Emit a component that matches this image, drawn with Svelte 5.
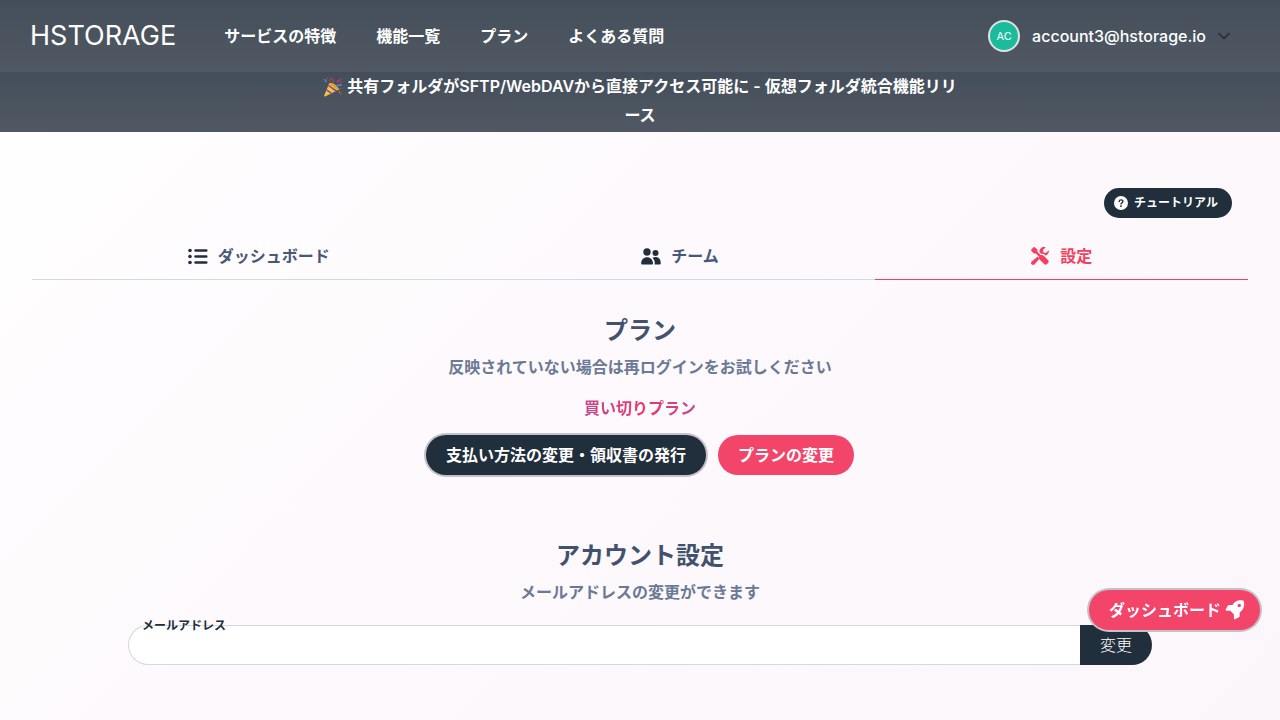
<script lang="ts">
  const links = ['サービスの特徴', '機能一覧', 'プラン', 'よくある質問'];

  const tabs = [
    { id: 'dashboard', label: 'ダッシュボード' },
    { id: 'team', label: 'チーム' },
    { id: 'settings', label: '設定' }
  ];

  let current = 'settings';
  let email = '';
</script>

<header>
  <div class="navbar">
    <a class="logo" href="#home">HSTORAGE</a>
    <nav>
      {#each links as link}
        <a href="#{link}">{link}</a>
      {/each}
    </nav>
    <button class="account">
      <span class="avatar">AC</span>
      <span>account3@hstorage.io</span>
      <svg class="chevron" width="12" height="12" viewBox="0 0 12 12" fill="none" stroke="#212e3b" stroke-width="1.6" stroke-linecap="round" stroke-linejoin="round" aria-hidden="true">
        <path d="M1 3.5l5 5 5-5" />
      </svg>
    </button>
  </div>
  <div class="banner">
    <a href="#news">
      <svg class="party" width="20" height="20" viewBox="0 0 20 20" aria-hidden="true">
        <path d="M6.2 6.2L1.2 18.6c-.2.7.2 1.1.9.8L16 12.6C14.2 8.7 10 5.200 6.200 6.200z" fill="#f6c53a" />
        <path d="M5 9.100l7.300 5.300 2.200-1.100C11 11.800 7.800 9.400 5.600 7.500zM3.200 13.600l4.200 3.200 1.700-.8-5.200-4z" fill="#8a4bb0" />
        <path d="M6.200 6.200c2.600-1.200 8.300 2.800 9.800 6.400-2.200.2-8.500-3.600-9.800-6.400z" fill="#e0a52c" />
        <path d="M1 2.500l2.500 1M2 5l1.500-1M13 9.500c1.500-1.600 3-1.800 6-1.300" fill="none" stroke="#4d8ce8" stroke-width="1.300" />
        <path d="M7 5c-1-2 .4-3.300 1.800-4M10 5.500C11 4 10.500 2.800 9 2M14.500 6c-.4-2 .5-2.600 1.500-2.500S17.500 2 18.500 1.700" fill="none" stroke="#b53a58" stroke-width="1.300" />
        <g fill="#d8455c">
          <circle cx="17.500" cy="11.500" r=".8" />
          <circle cx="18" cy="17" r=".8" />
          <circle cx="4.500" cy="1.600" r=".7" />
          <circle cx="18" cy="5" r=".7" />
        </g>
        <circle cx="16.500" cy="15" r=".7" fill="#e8ad36" />
      </svg>
      共有フォルダがSFTP/WebDAVから直接アクセス可能に - 仮想フォルダ統合機能リリース
    </a>
  </div>
</header>

<main>
  <div class="tools">
    <button class="tutorial">
      <svg width="14" height="14" viewBox="0 0 14 14" aria-hidden="true">
        <circle cx="7" cy="7" r="7" fill="#fff" />
        <path d="M5.200 5.600C5.200 4.500 6 3.900 7 3.900s1.900.6 1.900 1.600C8.900 6.700 7 6.800 7 8.100" fill="none" stroke="#212e3b" stroke-width="1.400" stroke-linecap="round" />
        <circle cx="7" cy="10.200" r=".9" fill="#212e3b" />
      </svg>
      チュートリアル
    </button>
  </div>

  <div class="tabs" role="tablist">
    {#each tabs as tab}
      <button role="tab" aria-selected={current === tab.id} class:active={current === tab.id} on:click={() => (current = tab.id)}>
        {#if tab.id === 'dashboard'}
          <svg width="20" height="20" viewBox="0 0 20 20" fill="#212e3b" aria-hidden="true">
            <circle cx="2" cy="4.500" r="1.800" />
            <circle cx="2" cy="10.500" r="1.800" />
            <circle cx="2" cy="16.500" r="1.800" />
            <rect x="6.300" y="3.300" width="13.200" height="2.400" rx="1.200" />
            <rect x="6.300" y="9.300" width="13.200" height="2.400" rx="1.200" />
            <rect x="6.300" y="15.300" width="13.200" height="2.400" rx="1.200" />
          </svg>
        {:else if tab.id === 'team'}
          <svg width="20" height="20" viewBox="0 0 20 20" fill="#212e3b" aria-hidden="true">
            <circle cx="6" cy="6" r="3.700" />
            <circle cx="14.500" cy="7" r="3" />
            <path d="M.2 17.500c0-3.800 2.500-6.200 5.800-6.200s6 2.400 6 6.200c0 .7-.4 1-1 1H1.200c-.6 0-1-.3-1-1z" />
            <path d="M11.500 11.900c.8-.6 1.800-.8 3-.8 3 0 5.200 2.200 5.200 5.500v1c0 .6-.3.900-.9.900h-5.200c.6-2.600-.2-5-2.100-6.600z" />
          </svg>
        {:else}
          <svg width="20" height="20" viewBox="0 0 20 20" fill="#f43f5e" aria-hidden="true">
            <path d="M1.300 3.600L3.600 1.300c.4-.4.700-.3 1.100 0l2.400 1.900c.3.300.4.600.4 1v1.700l3.200 3.200c1-.4 2.200-.1 3 .7l4.300 4.300c.9.900.9 2 0 2.900l-1 1c-.9.900-2 .9-2.900 0l-4.300-4.300c-.8-.8-1.100-2-.7-3L5.900 7.500H4.200c-.4 0-.7-.1-1-.4L1.300 4.700c-.3-.4-.3-.8 0-1.100z" />
            <path d="M18.700 4.200l-2.800 2.700-2.500-.4-.4-2.500 2.700-2.700c-1.900-.7-3.800-.2-5 1.100-1 1-1.400 2.300-1.200 3.600l1.800 1.900c1.500-.3 2.700.1 3.700 1.100l.6.600c.6-.2 1.200-.6 1.700-1.100 1.200-1.200 2-2.800 1.400-4.300z" />
            <path d="M7.800 10.600l-6.100 4.800c-1 1-1 2 0 2.900s2 .9 2.900 0l4.600-5.200c-.3-1-.6-1.800-1.400-2.500z" />
          </svg>
        {/if}
        {tab.label}
      </button>
    {/each}
  </div>

  <section class="plan">
    <h2>プラン</h2>
    <p>反映されていない場合は再ログインをお試しください</p>
    <div class="plan-name"><span>買い切りプラン</span></div>
    <div class="actions">
      <button class="btn dark ring">支払い方法の変更・領収書の発行</button>
      <button class="btn pink">プランの変更</button>
    </div>
  </section>

  <section class="settings">
    <h2>アカウント設定</h2>
    <p>メールアドレスの変更ができます</p>
    <form on:submit|preventDefault>
      <label for="email">メールアドレス</label>
      <input id="email" type="email" bind:value={email} />
      <button>変更</button>
    </form>
  </section>
</main>

<button class="btn pink ring floating">
  ダッシュボード
  <svg width="20" height="20" viewBox="0 0 20 20" aria-hidden="true">
    <path d="M18.800 1.300c-.1-.4-.3-.6-.7-.7-4.900-1-8 .3-10.600 4.300H4.200c-.6 0-1.200.4-1.500.9L.700 9.600c-.3.700.1 1.200.8 1.200h3.900l3.500 3.600v4c0 .7.600 1.100 1.200.8l3.700-1.900c.6-.3.900-.8.900-1.500v-3.500c4-2.700 5.100-6 4.100-11z" fill="#fff" />
    <circle cx="14.300" cy="5.500" r="1.700" fill="#f34469" />
  </svg>
</button>

<style>
  :global(body) {
    min-height: 100vh;
    background: linear-gradient(135deg, #fff 0%, #fdf9fc 45%, #faf6fa 100%);
    color: #212e3b;
    font-family: Inter, "Noto Sans CJK JP", sans-serif;
    font-size: 16px;
    font-weight: 600;
    line-height: 24px;
  }

  button,
  input {
    border: 0;
    font: inherit;
    color: inherit;
  }

  button {
    cursor: pointer;
  }

  a {
    color: #fff;
    text-decoration: none;
  }

  .navbar {
    display: flex;
    align-items: center;
    height: 72px;
    padding: 0 50px 0 30px;
    background: linear-gradient(#444e5a, #505963);
  }

  .logo {
    font-size: 27px;
    font-weight: 400;
  }

  nav {
    display: flex;
    flex: 1;
    gap: 40px;
    margin-left: 48px;
  }

  .account {
    display: flex;
    align-items: center;
    gap: 12px;
    padding: 0;
    background: none;
    color: #fff;
    font-weight: 500;
  }

  .avatar {
    box-sizing: border-box;
    width: 32px;
    height: 32px;
    border: 2px solid #e2e2e2;
    border-radius: 50%;
    background: #1abc9c;
    font-size: 11px;
    font-weight: 400;
    line-height: 28px;
    text-align: center;
  }

  .banner {
    padding-bottom: 2px;
    background: linear-gradient(#444e5a, #505963);
    line-height: 29px;
    text-align: center;
  }

  .banner a {
    display: block;
    max-width: 640px;
    margin: 0 auto;
  }

  .party {
    vertical-align: -5px;
  }

  main {
    padding: 56px 32px;
  }

  .tools {
    display: flex;
    justify-content: flex-end;
    padding-right: 16px;
  }

  .tutorial {
    display: flex;
    align-items: center;
    gap: 6px;
    height: 30px;
    padding: 0 14px 0 10px;
    border-radius: 15px;
    background: #212e3b;
    color: #fff;
    font-size: 12px;
  }

  .tabs {
    display: flex;
    margin-top: 14px;
  }

  .tabs button {
    display: flex;
    flex: 1 1 auto;
    align-items: center;
    justify-content: center;
    gap: 10px;
    height: 48px;
    padding: 0;
    border-bottom: 1px solid #d3d9e1;
    background: none;
    color: #475878;
  }

  .tabs .active {
    border-color: #f43f5e;
    color: #f43f5e;
  }

  section {
    text-align: center;
  }

  h2 {
    margin: 0;
    color: #42526e;
    font-size: 24px;
    font-weight: 600;
    line-height: 36px;
  }

  p {
    margin: 6px 0 0;
    color: #6b7a94;
  }

  .plan {
    padding-top: 33px;
  }

  .plan-name {
    margin-top: 17px;
  }

  .plan-name span {
    background: linear-gradient(90deg, #c04a8c, #f0356b 50%, #c04a8c);
    background-clip: text;
    color: transparent;
  }

  .actions {
    display: flex;
    justify-content: center;
    gap: 12px;
    margin-top: 15px;
  }

  .btn {
    height: 40px;
    padding: 0 20px;
    border-radius: 20px;
    color: #fff;
  }

  .dark {
    background: #212e3b;
  }

  .pink {
    background: #f34469;
  }

  .ring {
    box-shadow: 0 0 0 2px #c3c2c9;
  }

  .settings {
    padding: 63px 96px 0;
  }

  form {
    position: relative;
    display: flex;
    margin-top: 21px;
  }

  label {
    position: absolute;
    top: -11px;
    left: 14px;
    font-size: 12px;
  }

  input {
    box-sizing: border-box;
    flex: 1;
    min-width: 0;
    height: 40px;
    padding: 0 20px;
    border: 1px solid #d3d9e1;
    border-right: 0;
    border-radius: 20px 0 0 20px;
    background: #fff;
  }

  form button {
    padding: 0 20px;
    border-radius: 0 20px 20px 0;
    background: #212e3b;
    color: #fff;
    font-weight: 300;
  }

  .floating {
    position: fixed;
    right: 20px;
    bottom: 90px;
    display: flex;
    align-items: center;
    gap: 4px;
    padding-right: 15px;
  }
</style>
